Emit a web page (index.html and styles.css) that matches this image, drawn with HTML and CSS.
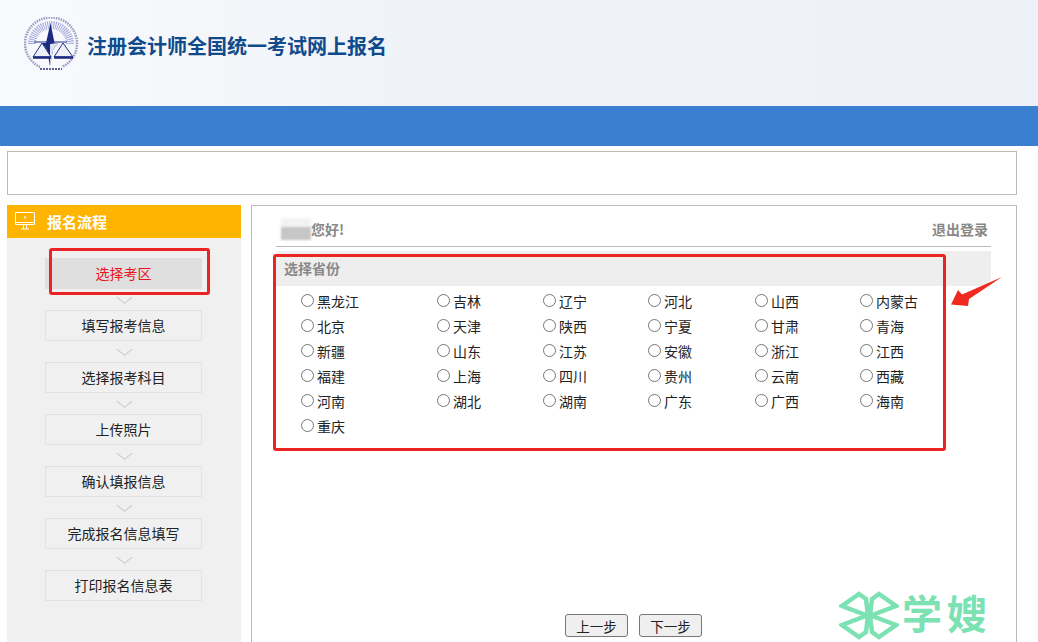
FILE: index.html
```html
<!DOCTYPE html>
<html lang="zh-CN">
<head>
<meta charset="utf-8">
<title>注册会计师全国统一考试网上报名</title>
<link rel="stylesheet" href="styles.css">
</head>
<body>
<header class="site-header">
  <svg class="logo" width="58" height="58" viewBox="0 0 58 58" aria-hidden="true">
    <rect width="58" height="58" fill="#f7f9fc"/>
    <path d="M16 50A26 26 0 1 1 38 50" fill="none" stroke="#9a9cc0" stroke-width="2.500" stroke-dasharray="1.500 1"/>
    <path d="M8 27A19 19 0 0 1 46 27" fill="none" stroke="#a5a8dc" stroke-width="8" stroke-dasharray="1 1"/>
    <path d="M26.500 6L30.500 26L22 26Z" fill="#1c2a80"/>
    <path d="M18 26L34 26L29 33L26 49L23 33Z" fill="#1c2a80"/>
    <path d="M26 27L34 26L29 33L26 49Z" fill="#dfe2f2"/>
    <path d="M10 25L43 25" stroke="#23308a" stroke-width="1"/>
    <path d="M18 26L9 40H27ZM39 26L30 40H49Z" fill="#eef0f8" stroke="#23308a" stroke-width="1"/>
    <path d="M9 40.500H27M30 40.500H49" stroke="#1c2a80" stroke-width="2.500"/>
    <path d="M16 52H38" stroke="#5c6095" stroke-width="2" stroke-dasharray="2 1"/>
  </svg>
  <h1 class="site-title">注册会计师全国统一考试网上报名</h1>
</header>
<div class="blue-bar"></div>
<div class="notice-box"></div>
<div class="layout">
  <aside class="sidebar">
    <div class="sidebar-head">
      <svg class="monitor" width="20" height="18" viewBox="0 0 20 18" aria-hidden="true">
        <path d="M.5 .5H19.500V12.500H.5ZM.5 10.500H19.500M6 17H14M8.500 12.500V17M11.500 12.500V17" fill="none" stroke="#fff" stroke-width="1"/>
        <path d="M9 3.500L11.500 5.500L10 6L9.500 7.500Z" fill="#fff"/>
      </svg>
      <span>报名流程</span>
    </div>
    <ol class="steps">
      <li class="step step-active">选择考区</li>
      <li class="step">填写报考信息</li>
      <li class="step">选择报考科目</li>
      <li class="step">上传照片</li>
      <li class="step">确认填报信息</li>
      <li class="step">完成报名信息填写</li>
      <li class="step">打印报名信息表</li>
    </ol>
  </aside>
  <main class="panel">
    <div class="greeting-row">
      <div class="greeting"><span class="blurred-name"></span><span>您好!</span></div>
      <a class="logout">退出登录</a>
    </div>
    <h2 class="section-title">选择省份</h2>
    <form class="province-grid">
      <label class="province"><input type="radio" name="p">黑龙江</label>
      <label class="province"><input type="radio" name="p">吉林</label>
      <label class="province"><input type="radio" name="p">辽宁</label>
      <label class="province"><input type="radio" name="p">河北</label>
      <label class="province"><input type="radio" name="p">山西</label>
      <label class="province"><input type="radio" name="p">内蒙古</label>
      <label class="province"><input type="radio" name="p">北京</label>
      <label class="province"><input type="radio" name="p">天津</label>
      <label class="province"><input type="radio" name="p">陕西</label>
      <label class="province"><input type="radio" name="p">宁夏</label>
      <label class="province"><input type="radio" name="p">甘肃</label>
      <label class="province"><input type="radio" name="p">青海</label>
      <label class="province"><input type="radio" name="p">新疆</label>
      <label class="province"><input type="radio" name="p">山东</label>
      <label class="province"><input type="radio" name="p">江苏</label>
      <label class="province"><input type="radio" name="p">安徽</label>
      <label class="province"><input type="radio" name="p">浙江</label>
      <label class="province"><input type="radio" name="p">江西</label>
      <label class="province"><input type="radio" name="p">福建</label>
      <label class="province"><input type="radio" name="p">上海</label>
      <label class="province"><input type="radio" name="p">四川</label>
      <label class="province"><input type="radio" name="p">贵州</label>
      <label class="province"><input type="radio" name="p">云南</label>
      <label class="province"><input type="radio" name="p">西藏</label>
      <label class="province"><input type="radio" name="p">河南</label>
      <label class="province"><input type="radio" name="p">湖北</label>
      <label class="province"><input type="radio" name="p">湖南</label>
      <label class="province"><input type="radio" name="p">广东</label>
      <label class="province"><input type="radio" name="p">广西</label>
      <label class="province"><input type="radio" name="p">海南</label>
      <label class="province"><input type="radio" name="p">重庆</label>
    </form>
    <div class="actions">
      <button type="button" class="btn">上一步</button>
      <button type="button" class="btn">下一步</button>
    </div>
  </main>
</div>
<div class="mark mark-step"></div>
<div class="mark mark-section"></div>
<svg class="mark-arrow" width="54" height="34" viewBox="0 0 54 34" aria-hidden="true">
  <path d="M2 29.500L9 15L13 19.500L53 2L20 24L19 31Z" fill="#f0291f"/>
</svg>
<div class="watermark">
  <svg width="60" height="49" viewBox="0 0 60 49" aria-hidden="true">
    <g fill="none" stroke="#7ce2b3" stroke-width="4.500" stroke-linejoin="miter">
      <path d="M27 8L20 3L3 15L28 24.500L3 34L20 46L27 41L29 24.500Z"/>
      <path d="M33 8L40 3L57 15L32 24.500L57 34L40 46L33 41L31 24.500Z"/>
    </g>
  </svg>
  <span class="watermark-text">学嫂</span>
</div>
</body>
</html>
```
FILE: styles.css
```css
* { box-sizing: border-box; }
html, body { height: 642px; overflow: hidden; }
body {
  margin: 0;
  position: relative;
  background: #fff;
  color: #222;
  font-family: "Noto Sans CJK SC", "Liberation Sans", sans-serif;
  font-size: 14px;
}
.site-header {
  height: 106px;
  display: flex;
  align-items: flex-start;
  padding: 17px 0 0 24px;
  background: linear-gradient(90deg, #f9fafc 0%, #eff3f8 40%, #eef2f8 100%);
}
.logo { flex: none; }
.site-title {
  margin: 15px 0 0 5px;
  font-size: 20px;
  line-height: 28px;
  font-weight: 700;
  color: #0f4b8c;
}
.blue-bar { height: 40px; background: #3a7fd0; }
.notice-box {
  height: 44px;
  margin: 5px 21px 0 7px;
  border: 1px solid #bbb;
}
.layout {
  display: flex;
  gap: 10px;
  height: 437px;
  margin: 10px 21px 0 7px;
}
.sidebar { flex: none; width: 234px; background: #f0f0f0; }
.sidebar-head {
  height: 33px;
  display: flex;
  align-items: center;
  gap: 12px;
  padding: 0 0 1px 8px;
  background: #ffb400;
  color: #fff;
  font-size: 15px;
  font-weight: 700;
}
.steps {
  list-style: none;
  margin: 20px 0 0 38px;
  padding: 0;
  width: 157px;
  display: flex;
  flex-direction: column;
  gap: 21px;
}
.step {
  position: relative;
  height: 31px;
  border: 1px solid #e2e2e2;
  font-size: 14px;
  line-height: 28px;
  text-align: center;
  color: #222;
}
.step:not(:last-child)::after {
  content: "";
  position: absolute;
  left: 74px;
  bottom: -14px;
  width: 8px;
  height: 8px;
  border-right: 1px solid #ccc;
  border-bottom: 1px solid #ccc;
  transform: scaleX(1.300) rotate(45deg);
}
.step-active { background: #dfdfdf; border-color: #dfdfdf; color: #e8141c; }
.panel {
  flex: 1;
  position: relative;
  border: 1px solid #bbb;
  border-bottom: 0;
  padding: 0 25px 0 24px;
}
.greeting-row {
  height: 41px;
  display: flex;
  justify-content: space-between;
  align-items: flex-start;
  padding: 11px 3px 0 5px;
  border-bottom: 1px solid #bbb;
  color: #888;
  font-size: 14px;
  font-weight: 700;
  line-height: 24px;
}
.greeting { display: flex; align-items: center; }
.blurred-name {
  width: 30px;
  height: 22px;
  background: linear-gradient(180deg, #f3f3f3 0 40%, #c6c6c6 40% 100%);
  filter: blur(1px);
}
.logout { color: #888; }
.section-title {
  margin: 4px 0 0;
  height: 35px;
  padding-left: 8px;
  background: #eee;
  color: #888;
  font-size: 14px;
  font-weight: 700;
  line-height: 35px;
}
.province-grid {
  display: grid;
  grid-template-columns: 136px 106px 105px 107px 105px 106px;
  grid-auto-rows: 25px;
  margin-top: 2px;
  padding-left: 25px;
}
.province { display: flex; align-items: center; font-size: 14px; color: #222; }
.province input { width: 13px; height: 13px; margin: 0 3px 0 0; }
.actions {
  position: absolute;
  top: 408px;
  left: 313px;
  display: flex;
  gap: 11px;
}
.btn {
  width: 63px;
  height: 23px;
  padding: 0;
  border: 1px solid #777;
  border-radius: 3px;
  background: #efefef;
  color: #222;
  font: 13.500px "Noto Sans CJK SC", sans-serif;
}
.mark { position: absolute; border: 3px solid #ec2323; border-radius: 3px; }
.mark-step { left: 49px; top: 248px; width: 161px; height: 47px; }
.mark-section { left: 273px; top: 254px; width: 673px; height: 197px; }
.mark-arrow { position: absolute; left: 949px; top: 275px; }
.watermark {
  position: absolute;
  left: 839px;
  top: 591px;
  display: flex;
  align-items: flex-start;
  gap: 3px;
  color: #7ce2b3;
}
.watermark-text {
  margin-top: -3px;
  font-size: 40px;
  line-height: 48px;
  letter-spacing: 5px;
  font-weight: 700;
}
```
